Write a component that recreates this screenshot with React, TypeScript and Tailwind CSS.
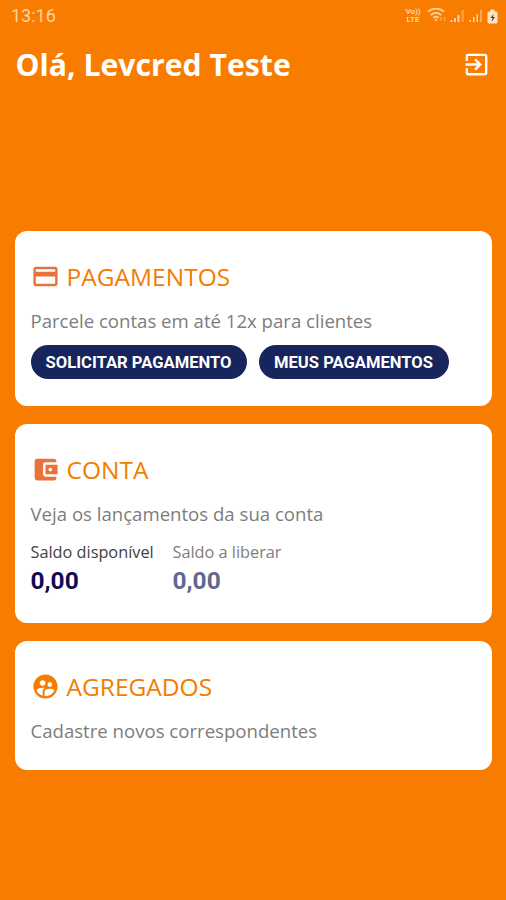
import React from "react";
import {
  MdAccountBalanceWallet,
  MdCreditCard,
  MdExitToApp,
  MdSupervisedUserCircle,
} from "react-icons/md";

function StatusBar() {
  return (
    <div className="flex h-8 items-center justify-between pl-[11px] pr-[8px] text-[#ffd2a0]">
      <span className="font-[Roboto] text-[18px] leading-8">13:16</span>
      <div className="flex items-center">
        <div className="mr-[6px] w-[16px] text-center font-[Roboto] text-[8px] font-bold">
          <div className="h-[8px] leading-[8px] whitespace-nowrap">Vo))</div>
          <div className="h-[8px] leading-[8px]">LTE</div>
        </div>
        {/* Wifi with traffic arrows */}
        <svg className="mr-[2px] h-[16px] w-[21px]" viewBox="0 0 21 16" fill="none" stroke="currentColor" strokeWidth="1.8">
          <path d="M1 3.800C5.500-0.400 12.500-0.400 17 3.800M3.800 7C7 4.200 11 4.200 14.200 7M6.300 9.800C8 8.500 10 8.500 11.700 9.800" />
          <path d="M9 13.500l-1.800-2.200h3.600z" fill="currentColor" stroke="none" />
          <path d="M14 9v4M17.500 9v4" strokeWidth="1.500" opacity="0.5" />
        </svg>
        {/* Signal bars of both SIM cards */}
        <svg className="mr-[4px] h-[14px] w-[15px]" viewBox="0 0 15 14" fill="currentColor">
          <path d="M0.500 11h2v2h-2zM4 9h2v4h-2zM7.500 6h2v7h-2z" />
          <path d="M11.500 1h2.500v12h-2.500z" opacity="0.4" />
        </svg>
        <svg className="mr-[4px] h-[14px] w-[14px]" viewBox="0 0 14 14" fill="currentColor">
          <path d="M0.500 11h1.500v2h-1.500zM4 8h1.500v5h-1.500zM7.500 5h1.500v8h-1.500z" />
          <path d="M11 1h2v12h-2z" opacity="0.5" />
        </svg>
        {/* Battery */}
        <svg className="h-[15px] w-[11px]" viewBox="0 0 11 15">
          <path d="M3.500 0.500h4v2h1.500q1.500 0 1.500 1.500v9q0 1.500-1.500 1.500h-7q-1.500 0-1.500-1.500v-9q0-1.500 1.500-1.500h1.500z" fill="#ffe3c2" />
          <path d="M6.500 5l-3 4h2l-1 4 3.500-5h-2z" fill="#4b3c2c" />
        </svg>
      </div>
    </div>
  );
}

type CardProps = {
  icon: React.ReactNode;
  title: string;
  description: string;
  className: string;
  children?: React.ReactNode;
};

function Card({ icon, title, description, className, children }: CardProps) {
  return (
    <section className={`rounded-[12px] bg-white px-[15.5px] pt-[27px] ${className}`}>
      <div className="flex h-[37px] items-center gap-[7px]">
        {icon}
        <h2 className="text-[24.5px] leading-[37px] text-[#f57c00]">{title}</h2>
      </div>
      <p className="mt-[13px] text-[18.6px] leading-[26px] whitespace-nowrap text-[#7d7d7d]">{description}</p>
      {children}
    </section>
  );
}

export default function App() {
  return (
    <div className="h-[900px] w-full overflow-hidden bg-[#f87c00] font-['Open_Sans',sans-serif]">
      <StatusBar />

      <header className="flex h-[65px] items-center justify-between pl-[15.5px] pr-[15px]">
        <h1 className="text-[30.2px] leading-[40px] font-bold text-white">Olá, Levcred Teste</h1>
        <MdExitToApp className="size-[29px] text-white" />
      </header>

      <main className="flex flex-col gap-[18px] pt-[134px] pl-[15px] pr-[14px]">
        <Card
          className="h-[175px]"
          icon={<MdCreditCard className="size-[29px] text-[#e8733a]" />}
          title="PAGAMENTOS"
          description="Parcele contas em até 12x para clientes"
        >
          <div className="mt-[11px] flex gap-[12px] font-[Roboto] text-[16.6px] leading-[24px] font-bold text-white">
            <button className="h-[34px] w-[216px] rounded-full bg-[#18245c] pt-[2px]">SOLICITAR PAGAMENTO</button>
            <button className="h-[34px] w-[190px] rounded-full bg-[#18245c] pt-[2px]">MEUS PAGAMENTOS</button>
          </div>
        </Card>

        <Card
          className="h-[199px]"
          icon={<MdAccountBalanceWallet className="size-[29px] text-[#e8733a]" />}
          title="CONTA"
          description="Veja os lançamentos da sua conta"
        >
          <div className="mt-[14px] flex">
            <div className="w-[142px]">
              <div className="text-[16.3px] leading-[22px] text-[#424242]">Saldo disponível</div>
              <div className="mt-[4px] font-[Roboto] text-[24.5px] leading-[28px] font-bold text-[#100c54]">0,00</div>
            </div>
            <div>
              <div className="text-[16.3px] leading-[22px] text-[#7d7d7d]">Saldo a liberar</div>
              <div className="mt-[4px] font-[Roboto] text-[24.5px] leading-[28px] font-bold text-[#626890]">0,00</div>
            </div>
          </div>
        </Card>

        <Card
          className="h-[129px]"
          icon={<MdSupervisedUserCircle className="size-[29px] text-[#f57c00]" />}
          title="AGREGADOS"
          description="Cadastre novos correspondentes"
        />
      </main>
    </div>
  );
}
